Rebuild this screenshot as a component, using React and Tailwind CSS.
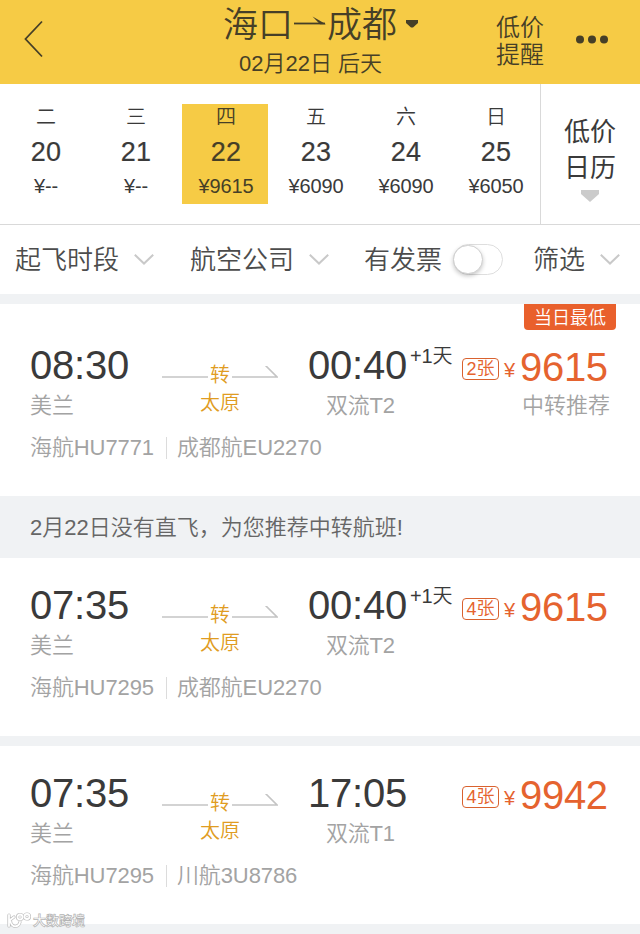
const days = [
  { name: '二', date: '20', price: '¥--' },
  { name: '三', date: '21', price: '¥--' },
  { name: '四', date: '22', price: '¥9615', active: true },
  { name: '五', date: '23', price: '¥6090' },
  { name: '六', date: '24', price: '¥6090' },
  { name: '日', date: '25', price: '¥6050' },
];

function Chevron() {
  return (
    <svg className="-mt-px h-3 w-5 shrink-0" viewBox="0 0 20 12" fill="none" stroke="#c9c9c9" strokeWidth="2">
      <path d="M.8 .8 10 9.500 19.2 .8" />
    </svg>
  );
}

function Header() {
  return (
    <header className="flex h-[84px] bg-[#f6cb45] text-[#463f27]">
      <div className="w-[180px] pl-6 pt-5">
        <svg className="h-[38px] w-5" viewBox="0 0 20 38" fill="none" stroke="currentColor" strokeWidth="1.8">
          <path d="M18 1.5 1.5 19 18 36.5" />
        </svg>
      </div>
      <div className="w-[286px] pl-[43px] pt-px">
        <div className="flex h-12 items-center text-[35px] leading-[48px]">
          <span>海口</span>
          <svg className="-mt-[2px] h-4 w-[34px] shrink-0" viewBox="0 0 34 16">
            <path d="M1 7.500h31" stroke="currentColor" strokeWidth="1.8" />
            <path d="M19.500 .5 33 8.300H27Z" fill="currentColor" />
          </svg>
          <span>成都</span>
          <svg className="-mt-[3px] ml-[9px] h-2 w-3 shrink-0" viewBox="0 0 12 8">
            <path d="M0 0h12v3L7 7.500H5L0 3Z" fill="currentColor" />
          </svg>
        </div>
        <div className="ml-[16px] text-[22px] leading-[30px] whitespace-nowrap">02月22日 后天</div>
      </div>
      <div className="ml-[30px] w-[80px] pt-[14px] text-2xl leading-[27px]">
        <div>低价</div>
        <div>提醒</div>
      </div>
      <svg className="mt-[35px] h-[9px] w-8" viewBox="0 0 32 9" fill="currentColor">
        <circle cx="4" cy="4.500" r="4" />
        <circle cx="16" cy="4.500" r="4" />
        <circle cx="28" cy="4.500" r="4" />
      </svg>
    </header>
  );
}

function Day({ name, date, price, active }) {
  return (
    <div className={`mx-[2px] flex h-[100px] w-[86px] flex-col items-center pl-[2px] ${active ? 'bg-[#f6cb45] text-[#463f27]' : ''}`}>
      <div className="mt-px h-6 text-xl leading-6">{name}</div>
      <div className="mt-[7px] text-[27px] leading-8 tracking-[0.300px] [-webkit-text-stroke:0.200px_currentColor]">{date}</div>
      <div className="mt-[6px] text-xl leading-6 tracking-[-0.100px]">{price}</div>
    </div>
  );
}

function Calendar() {
  return (
    <div className="flex h-[141px] border-b border-[#d9d9d9] text-[#3a3a3a]">
      <div className="flex w-[540px] pt-5">
        {days.map((d) => (
          <Day key={d.date} {...d} />
        ))}
      </div>
      <div className="flex w-[100px] flex-col items-center border-l border-[#d9d9d9] pt-[30px] pr-px text-[26px] leading-9 font-normal">
        <div>低价</div>
        <div>日历</div>
        <svg className="mt-[4px] h-3 w-[18px]" viewBox="0 0 18 12">
          <path d="M0 0h18v4l-9 8-9-8Z" fill="#cbcbcb" />
        </svg>
      </div>
    </div>
  );
}

function Filters() {
  return (
    <div className="flex h-[69px] items-center pt-px pl-[15px] text-[26px] leading-9 text-[#4c4c4c]">
      <span className="mr-[15px]">起飞时段</span>
      <Chevron />
      <span className="mr-[15px] ml-9">航空公司</span>
      <Chevron />
      <span className="ml-[35px]">有发票</span>
      <span className="-mt-[2px] ml-[11px] flex h-[31px] w-[50px] rounded-full border border-[#dedede]">
        <span className="-ml-px h-[29px] w-[30px] rounded-full border border-[#cfcfcf] bg-white shadow-[0_2px_4px_rgba(0,0,0,0.22)]" />
      </span>
      <span className="mr-[15px] ml-[30px]">筛选</span>
      <Chevron />
    </div>
  );
}

function Flight({ depart, arrive, nextDay, to, tickets, price, note, first, second }) {
  return (
    <div className="h-[178px] pl-[30px] pt-[23px]">
      <div className="flex h-[79px]">
        <div className="w-[132px]">
          <div className="text-[40px] leading-[48px] tracking-[-0.200px] text-[#3a3a3a]">{depart}</div>
          <div className="mt-[3px] text-[22px] leading-7 text-[#a3a3a3]">美兰</div>
        </div>
        <div className="flex w-[116px] flex-col items-center pt-5 text-xl leading-7 text-[#e09c22]">
          <div className="flex h-7 items-center">
            <svg className="-mt-[2px] h-4 w-[46px]" viewBox="0 0 46 16">
              <path d="M0 11h46" stroke="#c4c4c4" strokeWidth="1.600" />
            </svg>
            <span className="w-6 text-center">转</span>
            <svg className="-mt-[2px] h-4 w-[46px]" viewBox="0 0 46 16" fill="none" stroke="#c4c4c4" strokeWidth="1.600">
              <path d="M0 11h45L33.500-.5" />
            </svg>
          </div>
          <div>太原</div>
        </div>
        <div className="w-[184px] pl-[30px]">
          <div className="flex h-12 items-start whitespace-nowrap text-[#3a3a3a]">
            <span className="text-[40px] leading-[48px] tracking-[-0.200px]">{arrive}</span>
            {nextDay && <span className="ml-[3px] mt-[3px] text-xl leading-6 tracking-[-0.200px]">+1天</span>}
          </div>
          <div className="ml-[18px] mt-[3px] text-[22px] leading-7 tracking-[-0.200px] text-[#a3a3a3]">{to}</div>
        </div>
        <div className="w-[148px]">
          <div className="flex h-[51px] items-center pt-px text-[#e5632f]">
            <span className="mt-[4px] h-[22px] w-[37px] rounded-[4px] border border-[#d9622f] text-center text-lg leading-[21px]">{tickets}</span>
            <span className="mt-[6px] w-[21px] pl-[5px] text-xl leading-6">¥</span>
            <span className="text-[40px] leading-[47px] tracking-[-0.300px]">{price}</span>
          </div>
          {note && <div className="pl-[60px] text-[22px] leading-7 text-[#a3a3a3]">{note}</div>}
        </div>
      </div>
      <div className="mt-[14px] flex items-center text-[22px] leading-7 tracking-[-0.100px] text-[#a3a3a3]">
        <span>{first}</span>
        <span className="ml-3 mr-[10px] h-[22px] w-px bg-[#dcdcdc]" />
        <span>{second}</span>
      </div>
    </div>
  );
}

function Watermark() {
  return (
    <div className="absolute bottom-[5px] left-[7px] flex items-center gap-[2px]">
      <svg className="h-[17px] w-6" viewBox="0 0 24 17" fill="none" stroke="#bdbdbd" strokeWidth="3.200" strokeLinecap="round">
        <path d="M2 3v11M7 5 3 8l1 3c2 5 8 4 9-1" />
        <circle cx="13" cy="5" r="2.500" />
        <circle cx="20" cy="4.500" r="2.500" />
        <g stroke="#fff" strokeWidth="1.800">
          <path d="M2 3v11M7 5 3 8l1 3c2 5 8 4 9-1" />
          <circle cx="13" cy="5" r="2.500" />
          <circle cx="20" cy="4.500" r="2.500" />
        </g>
      </svg>
      <span className="text-[13px] leading-4 font-bold text-white [-webkit-text-stroke:0.700px_#b4b4b4]">大数跨境</span>
    </div>
  );
}

export default function App() {
  return (
    <div className="relative h-[934px] w-[640px] overflow-hidden bg-white font-['Liberation_Sans','Noto_Sans_CJK_SC',sans-serif] font-[350]" lang="zh-CN">
      <Header />
      <Calendar />
      <Filters />
      <div className="h-[10px] bg-[#f0f2f4]" />
      <div className="relative pt-[14px]">
        <div className="absolute top-0 right-6 h-[26px] w-[92px] rounded-b-[4px] bg-[#e9602c] text-center text-lg leading-7 text-white">当日最低</div>
        <Flight depart="08:30" arrive="00:40" nextDay to="双流T2" tickets="2张" price="9615" note="中转推荐" first="海航HU7771" second="成都航EU2270" />
      </div>
      <div className="h-[62px] bg-[#f0f2f4] pl-[30px] text-[22px] leading-[63px] text-[#666]">2月22日没有直飞，为您推荐中转航班!</div>
      <Flight depart="07:35" arrive="00:40" nextDay to="双流T2" tickets="4张" price="9615" first="海航HU7295" second="成都航EU2270" />
      <div className="h-[10px] bg-[#f0f2f4]" />
      <Flight depart="07:35" arrive="17:05" to="双流T1" tickets="4张" price="9942" first="海航HU7295" second="川航3U8786" />
      <div className="h-[10px] bg-[#f0f2f4]" />
      <Watermark />
    </div>
  );
}
